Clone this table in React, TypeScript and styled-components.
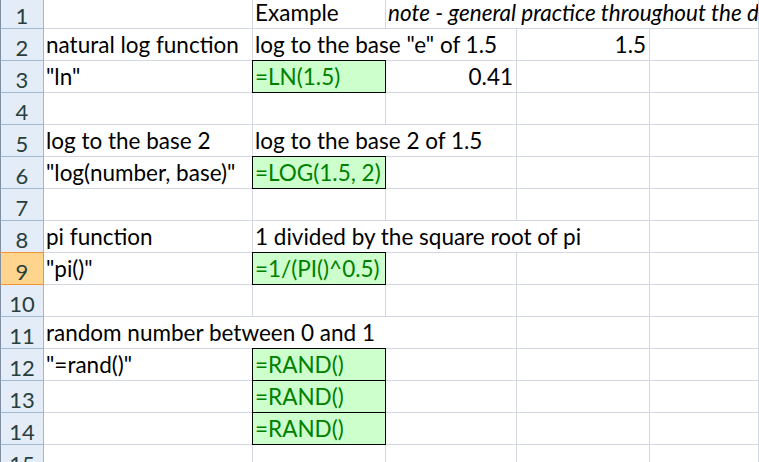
import React from 'react';
import styled, { createGlobalStyle, css } from 'styled-components';

type Kind = 'text' | 'formula' | 'number' | 'note';

interface CellData {
    span?: number;
    text?: string;
    kind?: Kind;
}

interface RowData {
    num: number;
    cells: CellData[];
}

const empty = (n: number): CellData[] => Array.from({ length: n }, () => ({}));

const rows: RowData[] = [
    {
        num: 1,
        cells: [
            {},
            { text: 'Example' },
            { span: 3, kind: 'note', text: 'note - general practice throughout the document' },
        ],
    },
    {
        num: 2,
        cells: [
            { text: 'natural log function' },
            { span: 2, text: 'log to the base "e" of 1.5' },
            { kind: 'number', text: '1.5' },
            {},
        ],
    },
    {
        num: 3,
        cells: [
            { text: '"ln"' },
            { kind: 'formula', text: '=LN(1.5)' },
            { kind: 'number', text: '0.41' },
            {},
            {},
        ],
    },
    { num: 4, cells: empty(5) },
    {
        num: 5,
        cells: [{ text: 'log to the base 2' }, { span: 2, text: 'log to the base 2 of 1.5' }, {}, {}],
    },
    {
        num: 6,
        cells: [{ text: '"log(number, base)"' }, { kind: 'formula', text: '=LOG(1.5, 2)' }, {}, {}, {}],
    },
    { num: 7, cells: empty(5) },
    {
        num: 8,
        cells: [{ text: 'pi function' }, { span: 3, text: '1 divided by the square root of pi' }, {}],
    },
    {
        num: 9,
        cells: [{ text: '"pi()"' }, { kind: 'formula', text: '=1/(PI()^0.5)' }, {}, {}, {}],
    },
    { num: 10, cells: empty(5) },
    {
        num: 11,
        cells: [{ span: 3, text: 'random number between 0 and 1' }, {}, {}],
    },
    {
        num: 12,
        cells: [{ text: '"=rand()"' }, { kind: 'formula', text: '=RAND()' }, {}, {}, {}],
    },
    { num: 13, cells: [{}, { kind: 'formula', text: '=RAND()' }, {}, {}, {}] },
    { num: 14, cells: [{}, { kind: 'formula', text: '=RAND()' }, {}, {}, {}] },
    { num: 15, cells: empty(5) },
];

const ACTIVE_ROW = 9;

const GlobalStyle = createGlobalStyle`
    html, body {
        margin: 0;
        padding: 0;
        background: #fff;
    }
`;

const Viewport = styled.div`
    width: 759px;
    height: 462px;
    overflow: hidden;
    background: #fff;
    font-family: Lato, 'Open Sans', sans-serif;
`;

const Sheet = styled.div`
    display: grid;
    grid-template-columns: 44px 209px 133px 131px 133px 1fr;
    grid-auto-rows: 32px;
    margin-top: -3px;
    width: 759px;
`;

const RowHeader = styled.div<{ $active: boolean }>`
    box-sizing: border-box;
    display: flex;
    align-items: center;
    justify-content: center;
    padding-top: 5px;
    border-left: 1px solid #7f8fa0;
    border-right: 1px solid #9eb6ce;
    border-bottom: 1px solid #9eb6ce;
    background: #e4ecf7;
    color: #27403d;
    font-size: 22px;
    ${(p) =>
        p.$active &&
        css`
            background: #ffd58d;
            border-right-color: #f29436;
            border-bottom-color: #f29436;
            box-shadow: 0 -1px 0 #f29436;
            position: relative;
        `}
`;

const Cell = styled.div<{ $span: number; $kind: Kind }>`
    position: relative;
    box-sizing: border-box;
    grid-column: span ${(p) => p.$span};
    padding: 0 3px 0 2px;
    border-right: 1px solid #d4d8e0;
    border-bottom: 1px solid #d4d8e0;
    font-size: 22.5px;
    line-height: 31px;
    white-space: nowrap;
    overflow: hidden;
    color: #000;
    text-align: ${(p) => (p.$kind === 'number' ? 'right' : 'left')};
    font-style: ${(p) => (p.$kind === 'note' ? 'italic' : 'normal')};
    ${(p) =>
        p.$kind === 'formula' &&
        css`
            overflow: visible;
            background: #ccffcc;
            color: #008000;
            &::after {
                content: '';
                position: absolute;
                top: -1px;
                left: -1px;
                right: -1px;
                bottom: -1px;
                border: 1px solid #000;
                pointer-events: none;
            }
        `}
`;

export default function App() {
    return (
        <>
            <GlobalStyle />
            <Viewport>
                <Sheet>
                    {rows.map((row) => (
                        <React.Fragment key={row.num}>
                            <RowHeader $active={row.num === ACTIVE_ROW}>{row.num}</RowHeader>
                            {row.cells.map((c, i) => (
                                <Cell key={i} $span={c.span ?? 1} $kind={c.kind ?? 'text'}>
                                    {c.text}
                                </Cell>
                            ))}
                        </React.Fragment>
                    ))}
                </Sheet>
            </Viewport>
        </>
    );
}
